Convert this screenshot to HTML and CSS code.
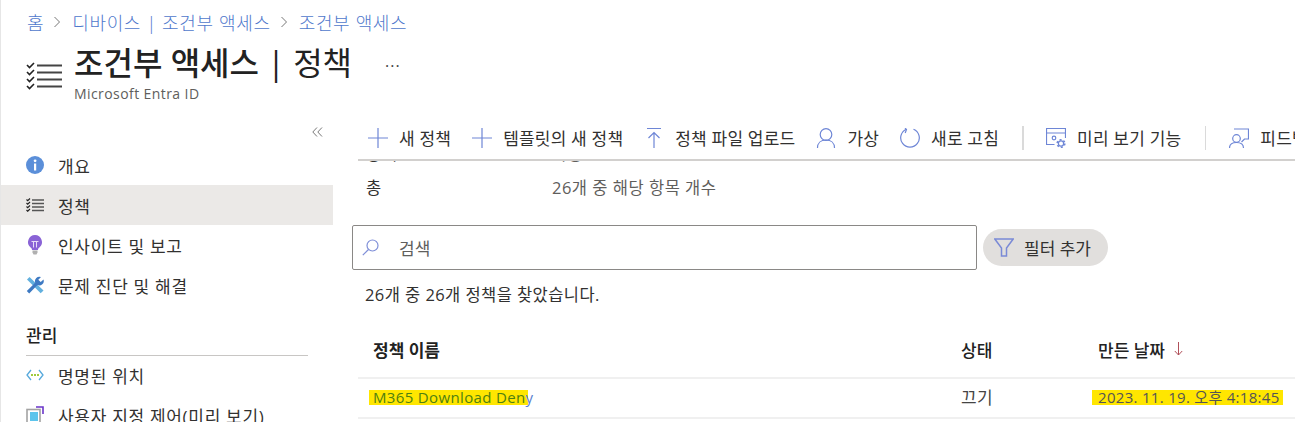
FILE: index.html
```html
<!DOCTYPE html>
<html lang="ko">
<head>
<meta charset="utf-8">
<title>조건부 액세스 | 정책</title>
<link rel="stylesheet" href="styles.css">
</head>
<body>
<div class="page">
  <header class="top">
    <nav class="crumbs">
      <a>홈</a>
      <svg class="chev" viewBox="0 0 8 12"><path d="M1.500 1l5 5-5 5" /></svg>
      <a>디바이스 | 조건부 액세스</a>
      <svg class="chev" viewBox="0 0 8 12"><path d="M1.500 1l5 5-5 5" /></svg>
      <a>조건부 액세스</a>
    </nav>
    <div class="titlebar">
      <svg class="title-icon" viewBox="0 0 36 28">
        <g class="chk"><path d="M1 3l2.500 2.500L8 1"/><path d="M1 10l2.500 2.500L8 8"/><path d="M1 17l2.500 2.500L8 15"/><path d="M1 24l2.500 2.500L8 22"/></g>
        <g class="lines"><path d="M11 3.500h25M11 10.500h25M11 17.500h25M11 24.500h25"/></g>
      </svg>
      <div class="title-text">
        <h1>조건부 액세스 <span class="title-sub">| 정책</span></h1>
        <p>Microsoft Entra ID</p>
      </div>
      <span class="more">···</span>
    </div>
  </header>
  <div class="body">
    <aside class="side">
      <div class="collapse">
        <svg viewBox="0 0 11 10"><path d="M5 .5L.8 5 5 9.500M10 .5L5.800 5l4.200 4.500"/></svg>
      </div>
      <ul class="menu">
        <li><svg class="mi" viewBox="0 0 18 18"><circle cx="9" cy="9" r="9" fill="#5b8fd9"/><rect x="8" y="7.500" width="2.200" height="7" fill="#fff"/><circle cx="9.100" cy="4.800" r="1.400" fill="#fff"/></svg>개요</li>
        <li class="on"><svg class="mi" viewBox="0 0 18 14"><g class="chk thin"><path d="M.5 1.500l1.200 1.200L4 .5"/><path d="M.5 5l1.200 1.200L4 4"/><path d="M.5 8.500l1.200 1.200L4 7.500"/><path d="M.5 12l1.200 1.200L4 11"/></g><g class="lines thin"><path d="M6 2h12M6 5.500h12M6 9h12M6 12.500h12"/></g></svg>정책</li>
        <li><svg class="mi" viewBox="0 0 18 20"><path d="M9 0a7 7 0 0 0-4.400 12.400c.9.700 1.400 1.400 1.400 2.600h6c0-1.200.5-1.900 1.400-2.600A7 7 0 0 0 9 0z" fill="#8a63d6"/><path d="M6.500 15.500h5v2l-1 2h-3l-1-2z" fill="#b0b0b0"/><path d="M5.500 6.500h7M7.500 6.500v6M10.500 6.500v6" stroke="#e6dcf7" fill="none"/></svg>인사이트 및 보고</li>
        <li><svg class="mi" viewBox="0 0 18 18"><path d="M1 3.500L3.500 1l14 13.500-2.800 2.800z" fill="#62b0de"/><path d="M17.500 3.500l-2.800 2.500-2.400-2.300L15 1a4.500 4.500 0 0 0-5.800 5.700L.8 15l2.400 2.500 8.200-8.400a4.500 4.500 0 0 0 6.100-5.600z" fill="#3d79c2"/></svg>문제 진단 및 해결</li>
      </ul>
      <h2 class="group">관리</h2>
      <ul class="menu">
        <li><svg class="mi" viewBox="0 0 18 12"><path d="M5 1L1 6l4 5M13 1l4 5-4 5" fill="none" stroke="#57a9dc" stroke-width="1.300"/><circle cx="6" cy="6" r="1" fill="#7fba00"/><circle cx="9" cy="6" r="1" fill="#7fba00"/><circle cx="12" cy="6" r="1" fill="#7fba00"/></svg>명명된 위치</li>
        <li><svg class="mi" viewBox="0 0 18 18"><rect x="1" y="3.500" width="13" height="13.500" fill="none" stroke="#a3a3a3" stroke-width="1.600"/><rect x="4" y="6" width="8" height="9" fill="#5cc4ec"/><path d="M10 1h7v7" fill="none" stroke="#6a35c9" stroke-width="1.600"/></svg>사용자 지정 제어(미리 보기)</li>
      </ul>
    </aside>
    <main class="main">
      <div class="cmd">
        <button class="btn"><svg class="ci" viewBox="0 0 20 20"><path d="M10 0v20M0 10h20"/></svg>새 정책</button>
        <button class="btn"><svg class="ci" viewBox="0 0 20 20"><path d="M10 0v20M0 10h20"/></svg>템플릿의 새 정책</button>
        <button class="btn"><svg class="ci" viewBox="0 0 20 20"><path d="M3 .5h14M10 20V4.500M4.500 10L10 4.500l5.500 5.500"/></svg>정책 파일 업로드</button>
        <button class="btn"><svg class="ci" viewBox="0 0 20 20"><circle cx="10" cy="6.500" r="5.800"/><path d="M1.500 20c0-5 3.500-8 8.500-8s8.500 3 8.500 8"/></svg>가상</button>
        <button class="btn"><svg class="ci" viewBox="0 0 20 20"><path d="M13.500 1.200a9.300 9.300 0 1 1-7 0"/><path d="M5 .2l1.500 1.300L5.200 5"/></svg>새로 고침</button>
        <span class="sep"></span>
        <button class="btn"><svg class="ci" viewBox="0 0 20 20"><path d="M8.500 16.500H.5V.5h19V10M.5 5h19"/><circle cx="8" cy="10" r="1.800"/><circle cx="15" cy="15.500" r="2.600"/><circle class="teeth" cx="15" cy="15.500" r="3.800"/></svg>미리 보기 기능</button>
        <span class="sep thin"></span>
        <button class="btn"><svg class="ci" viewBox="0 0 20 20"><circle cx="7.500" cy="10.500" r="3.800"/><path d="M.5 20c0-3.500 3-5.500 7-5.500s7 2 7 5.500M5 1h14.500v10h-4l-3 3"/></svg>피드백</button>
      </div>
      <div class="content">
        <dl class="summary clipped"><dt>상태</dt><dd>사용</dd></dl>
        <dl class="summary"><dt>총</dt><dd>26개 중 해당 항목 개수</dd></dl>
        <div class="filters">
          <label class="search">
            <svg viewBox="0 0 17 17"><circle cx="10.500" cy="6.500" r="5.500"/><path d="M6.500 10.500L.8 16.200"/></svg>
            <span>검색</span>
          </label>
          <button class="pill"><svg viewBox="0 0 20 20"><path d="M.8 1h18.400L12.500 10v8h-5v-8z"/></svg>필터 추가</button>
        </div>
        <p class="count">26개 중 26개 정책을 찾았습니다.</p>
        <div class="grid head">
          <span>정책 이름</span>
          <span>상태</span>
          <span>만든 날짜 <svg class="sort" viewBox="0 0 9 14"><path d="M4.500 0v13M.8 9l3.700 4 3.700-4"/></svg></span>
        </div>
        <div class="grid row">
          <span><a class="link"><mark class="hl hl-link">M365 Download Den</mark>y</a></span>
          <span class="state">끄기</span>
          <span><mark class="hl hl-date">2023. 11. 19. 오후 4:18:45</mark></span>
        </div>
      </div>
    </main>
  </div>
</div>
</body>
</html>
```

FILE: styles.css
```css
* { box-sizing: border-box; }
html, body { margin: 0; height: 100%; overflow: hidden; background: #fff; }
body {
  font-family: "Open Sans", "Noto Sans CJK KR", sans-serif;
  color: #323130;
  font-size: 14px;
}
.page { height: 422px; overflow: hidden; border-left: 1px solid #e6e6e6; }
svg { display: block; flex: none; }

/* header */
.top { height: 116px; padding-left: 26px; }
.crumbs { display: flex; align-items: center; height: 44px; padding-bottom: 1px; font-size: 18px; font-weight: 300; color: #4f78cc; letter-spacing: .65px; }
.crumbs .chev { width: 8px; height: 12px; margin: 0 11px 0 9px; fill: none; stroke: #777; stroke-width: 1; }
.titlebar { display: flex; align-items: flex-start; }
.title-icon { width: 36px; height: 28px; margin: 18px 12px 0 -1px; fill: none; }
.chk { fill: none; stroke: #222; stroke-width: 1.600; }
.lines { fill: none; stroke: #444; stroke-width: 2; }
.chk.thin { stroke-width: 1.200; }
.lines.thin { stroke-width: 1.600; stroke: #555; }
.title-text h1 { margin: 0; font-size: 32px; line-height: 38px; font-weight: 500; color: #222; }
.title-sub { font-weight: 400; }
.title-text p { margin: 4px 0 0; font-size: 14px; line-height: 16px; color: #605e5c; letter-spacing: .42px; }
.more { margin-left: 33px; margin-top: 11px; font-size: 16px; color: #444; letter-spacing: 1px; }

.body { display: flex; height: 306px; }

/* sidebar */
.side { width: 332px; flex: none; }
.collapse { height: 29px; padding: 11px 0 0 311px; }
.collapse svg { width: 11px; height: 10px; fill: none; stroke: #777; stroke-width: 1; }
.menu { list-style: none; margin: 0; padding: 0; }
.menu li { display: flex; align-items: center; height: 40px; padding-left: 25px; font-size: 17px; letter-spacing: .7px; color: #323130; }
.menu li.on { background: #ebe9e7; }
.mi { width: 18px; margin-right: 14px; }
.group { margin: 20px 25px -1px; height: 31px; font-size: 17px; line-height: 22px; font-weight: 500; color: #222; border-bottom: 1px solid #c8c6c4; width: 282px; }

/* command bar */
.main { flex: 1; min-width: 0; padding-left: 19px; }
.cmd { display: flex; align-items: center; height: 45px; border-bottom: 2px solid #d2d0ce; margin-left: 6px; padding-left: 10px; overflow: hidden; white-space: nowrap; }
.btn { display: flex; align-items: center; flex: none; background: none; border: 0; padding: 0; margin: 0 21px 0 0; font: inherit; font-size: 17px; letter-spacing: .2px; color: #323130; height: 32px; }
.ci { width: 20px; height: 20px; margin-right: 11px; fill: none; stroke: #6e86d6; stroke-width: 1.200; }
.ci .teeth { stroke-width: 1.600; stroke-dasharray: 2 2; }
.sep { width: 2px; height: 24px; background: #dadada; margin: 0 22px 0 2px; flex: none; }
.sep.thin { width: 1px; margin: 0 23px 0 3px; }

/* content */
.content { height: 261px; overflow: hidden; }
.summary { display: flex; align-items: center; margin: 12px 0 0; font-size: 16.500px; letter-spacing: .5px; height: 22px; }
.summary.clipped { margin: -19px 0 0; }
.summary dt { width: 200px; padding-left: 14px; }
.summary dd { margin: 0; color: #5f5e5c; }
.filters { display: flex; align-items: center; gap: 6px; margin-top: 27px; }
.search { display: flex; align-items: center; width: 625px; height: 45px; border: 1px solid #8a8886; border-radius: 2px; padding-left: 9px; color: #605e5c; font-size: 17px; }
.search svg { width: 17px; height: 17px; margin-right: 20px; fill: none; stroke: #7f8fd8; stroke-width: 1.200; }
.pill { display: flex; align-items: center; width: 125px; height: 37px; border: 0; border-radius: 19px; background: #e1dfdd; padding-left: 11px; font: inherit; font-size: 17px; color: #323130; }
.pill svg { width: 20px; height: 20px; margin-right: 10px; fill: none; stroke: #7a8ad6; stroke-width: 1.500; }
.count { margin: 14px 0 0 13px; height: 22px; line-height: 22px; font-size: 16.500px; letter-spacing: .43px; color: #323130; }
.grid { display: grid; grid-template-columns: 588px 137px 1fr; align-items: center; margin-left: 6px; }
.head { height: 73px; padding: 15px 0 0 15px; border-bottom: 2px solid #f0f0f0; font-size: 17px; font-weight: 500; color: #222; }
.head span { display: flex; align-items: center; gap: 2px; white-space: pre; }
.head span:first-child { font-weight: 700; }
.sort { width: 9px; height: 14px; margin-left: 3px; fill: none; stroke: #b0505a; stroke-width: 1; }
.row { height: 40px; padding: 0 0 3px 15px; border-bottom: 2px solid #f0f0f0; font-size: 15px; letter-spacing: .35px; color: #444; }
.row span:first-child { margin-left: -4px; }
.row span:last-child { margin-left: -6px; letter-spacing: .3px; }
.row .state { font-size: 17px; }
.link { color: #5b82d0; }
.hl { background: #ffe600; line-height: 15px; display: inline-block; }
.hl-link { color: #4f8010; padding: 0 2px 0 4px; margin-right: -2px; }
.hl-date { padding: 0 3px 0 6px; color: #555; }
```
